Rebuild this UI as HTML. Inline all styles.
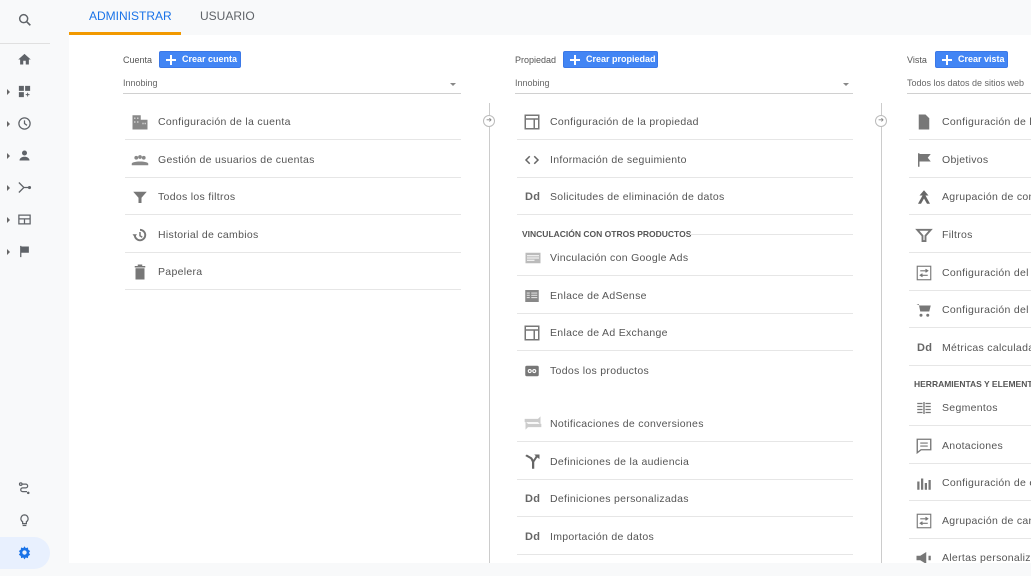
<!DOCTYPE html>
<html><head><meta charset="utf-8"><style>
*{margin:0;padding:0;box-sizing:border-box}
body{width:1031px;height:572px;overflow:hidden;background:#f8f9fa;font-family:"Liberation Sans",Arial,sans-serif;position:relative;color:#444}
.side{position:absolute;left:0;top:0;width:50px;height:572px;background:#f8f9fa}
.main{position:absolute;left:69px;top:35px;width:962px;height:528px;background:#fff}
.tab{position:absolute;top:9px;font-size:12px;color:#5f6368}
.r{position:absolute;height:38px;border-bottom:1px solid #e6e6e6;font-size:10.5px;color:#555;letter-spacing:.3px}
.r .t{position:absolute;left:33px;top:14px;white-space:nowrap}
.r svg,.r .ic{position:absolute;left:6px;top:11px}
.nb{border-bottom:none}
.dd{font-weight:bold;color:#666;font-size:11px;position:absolute;left:8px;top:14px}
.lbl{position:absolute;font-size:9px;color:#555}
.btn{position:absolute;height:17px;background:#4285f4;border:1px solid #3b78e7;border-radius:2px;color:#fff;font-size:9px;font-weight:bold;line-height:15px;padding-left:22px}
.btn:before{content:"";position:absolute;left:6px;top:7px;width:10px;height:2px;background:#fff}
.btn:after{content:"";position:absolute;left:10px;top:3px;width:2px;height:10px;background:#fff}
.sel{position:absolute;font-size:9px;color:#666;border-bottom:1px solid #d0d0d0;height:16px}
.hdr{position:absolute;font-size:8.5px;font-weight:bold;color:#555;white-space:nowrap}
.vl{position:absolute;width:1px;background:#ccc}
.circ{position:absolute;width:12px;height:12px;border:1px solid #bbb;border-radius:50%;background:#fff;font-size:7px;color:#888;text-align:center;line-height:10px}
.si{position:absolute;left:17px}
.ar{position:absolute;left:7px;width:0;height:0;border-left:3px solid #666;border-top:3px solid transparent;border-bottom:3px solid transparent}
</style></head><body>
<div class="side">
<svg class="si" style="top:12px" width="16" height="16" viewBox="0 0 24 24"><circle cx="10" cy="10" r="6" fill="none" stroke="#5f6368" stroke-width="2.2"/><path d="M14.5 14.5L20 20" stroke="#5f6368" stroke-width="2.5"/></svg>
<div style="position:absolute;left:0;top:43px;width:50px;height:1px;background:#e0e0e0"></div>
<svg class="si" style="top:52px" width="15" height="15" viewBox="0 0 24 24"><path d="M10 20v-6h4v6h5v-8h3L12 3 2 12h3v8z" fill="#5f6368"/></svg>
<div class="ar" style="top:89px"></div>
<svg class="si" style="top:84px" width="15" height="15" viewBox="0 0 24 24"><path d="M3 3h8v8H3zM13 3h8v8h-8zM3 13h8v8H3z" fill="#5f6368"/><path d="M17 14v6M14 17h6" stroke="#5f6368" stroke-width="1.5"/></svg>
<div class="ar" style="top:121px"></div>
<svg class="si" style="top:116px" width="15" height="15" viewBox="0 0 24 24"><circle cx="12" cy="12" r="9" fill="none" stroke="#5f6368" stroke-width="2"/><path d="M12 7v5l4 3" fill="none" stroke="#5f6368" stroke-width="2"/></svg>
<div class="ar" style="top:153px"></div>
<svg class="si" style="top:148px" width="15" height="15" viewBox="0 0 24 24"><circle cx="12" cy="8" r="4" fill="#5f6368"/><path d="M4 20c0-4 4-6 8-6s8 2 8 6z" fill="#5f6368"/></svg>
<div class="ar" style="top:185px"></div>
<svg class="si" style="top:180px" width="15" height="15" viewBox="0 0 24 24"><path d="M3 4l8 8-8 8M11 12h8" fill="none" stroke="#5f6368" stroke-width="2"/><circle cx="20" cy="12" r="2.5" fill="#5f6368"/></svg>
<div class="ar" style="top:217px"></div>
<svg class="si" style="top:212px" width="15" height="15" viewBox="0 0 24 24"><rect x="3" y="5" width="18" height="14" fill="none" stroke="#5f6368" stroke-width="2"/><path d="M3 11h18M12 11v8" stroke="#5f6368" stroke-width="2"/></svg>
<div class="ar" style="top:249px"></div>
<svg class="si" style="top:244px" width="15" height="15" viewBox="0 0 24 24"><path d="M5 3h2v18H5zM7 4h12v10H7z" fill="#5f6368"/></svg>
<svg class="si" style="top:481px" width="15" height="15" viewBox="0 0 24 24"><circle cx="6" cy="5" r="2" fill="none" stroke="#5f6368" stroke-width="2"/><circle cx="18" cy="19" r="2" fill="#5f6368"/><path d="M8 5h6a3 3 0 010 6H9a3 3 0 000 6h7" fill="none" stroke="#5f6368" stroke-width="2"/></svg>
<svg class="si" style="top:513px" width="15" height="15" viewBox="0 0 24 24"><path d="M12 3a6 6 0 00-3 11v3h6v-3a6 6 0 00-3-11zM9 20h6" fill="none" stroke="#5f6368" stroke-width="2"/></svg>
<div style="position:absolute;left:0;top:537px;width:50px;height:32px;background:#e8f0fe;border-radius:0 16px 16px 0"></div>
<svg class="si" style="top:545px" width="15" height="15" viewBox="0 0 24 24"><path d="M12 2l2 3 3.5-1 .5 3.5 3 2-2 3 2 3-3 2-.5 3.5-3.5-1-2 3-2-3-3.5 1-.5-3.5-3-2 2-3-2-3 3-2 .5-3.5 3.5 1z" fill="#1a73e8"/><circle cx="12" cy="12" r="3.5" fill="#e8f0fe"/></svg>
</div>
<div class="tab" style="left:89px;color:#1a73e8">ADMINISTRAR</div>
<div class="tab" style="left:200px">USUARIO</div>
<div style="position:absolute;left:69px;top:32px;width:112px;height:3px;background:#f29900"></div>
<div class="main"></div>

<!-- col1 -->
<div class="lbl" style="left:123px;top:55px">Cuenta</div>
<div class="btn" style="left:159px;top:51px;width:82px">Crear cuenta</div>
<div class="sel" style="left:123px;top:78px;width:338px">Innobing</div>
<span style="position:absolute;left:450px;top:83px;border-left:3px solid transparent;border-right:3px solid transparent;border-top:3px solid #888"></span>
<div class="r" style="left:125px;top:102px;width:336px"><svg width="18" height="18" viewBox="0 0 24 24"><path d="M2 3h11v19H2zM13 9h9v13h-9z" fill="#888"/><path d="M4 6h2v2H4zM8 6h2v2H8zM4 11h2v2H4zM8 11h2v2H8zM15 13h2v2h-2zM18 13h2v2h-2z" fill="#ccc"/></svg><span class="t">Configuración de la cuenta</span></div>
<div class="r" style="left:125px;top:140px;width:336px"><svg width="18" height="18" viewBox="0 0 24 24"><circle cx="7" cy="9" r="2.5" fill="#888"/><circle cx="12" cy="8" r="2.5" fill="#888"/><circle cx="17" cy="9" r="2.5" fill="#888"/><path d="M1 17c0-4 22-4 22 0v2H1z" fill="#888"/></svg><span class="t">Gestión de usuarios de cuentas</span></div>
<div class="r" style="left:125px;top:177px;width:336px"><svg width="18" height="18" viewBox="0 0 24 24"><path d="M3 5h18l-7 8v7h-4v-7z" fill="#777"/></svg><span class="t">Todos los filtros</span></div>
<div class="r" style="left:125px;top:215px;width:336px"><svg width="18" height="18" viewBox="0 0 24 24"><path d="M5 12a7 7 0 107-7" fill="none" stroke="#777" stroke-width="2.5"/><path d="M12 8v5l3 2" fill="none" stroke="#777" stroke-width="2"/><path d="M2 11h6l-3 4z" fill="#777"/></svg><span class="t">Historial de cambios</span></div>
<div class="r" style="left:125px;top:252px;width:336px"><svg width="18" height="18" viewBox="0 0 24 24"><path d="M5 4h14v2H5zM9 2h6v2H9zM6 7h12v15H6z" fill="#777"/></svg><span class="t">Papelera</span></div>

<div class="vl" style="left:489px;top:103px;height:460px"></div>
<div class="circ" style="left:483px;top:115px">➜</div>
<div class="vl" style="left:881px;top:103px;height:460px"></div>
<div class="circ" style="left:875px;top:115px">➜</div>

<!-- col2 -->
<div class="lbl" style="left:515px;top:55px">Propiedad</div>
<div class="btn" style="left:563px;top:51px;width:95px">Crear propiedad</div>
<div class="sel" style="left:515px;top:78px;width:338px">Innobing<span style="position:absolute;right:4px;top:5px;border-left:3px solid transparent;border-right:3px solid transparent;border-top:3px solid #888"></span></div>
<div class="r" style="left:517px;top:102px;width:336px"><svg width="18" height="18" viewBox="0 0 24 24"><rect x="3" y="3" width="18" height="18" fill="none" stroke="#777" stroke-width="2"/><path d="M3 8h18M15 8v13" stroke="#777" stroke-width="2"/></svg><span class="t">Configuración de la propiedad</span></div>
<div class="r" style="left:517px;top:140px;width:336px"><svg width="18" height="18" viewBox="0 0 24 24"><path d="M9 7l-5 5 5 5M15 7l5 5-5 5" fill="none" stroke="#666" stroke-width="2"/></svg><span class="t">Información de seguimiento</span></div>
<div class="r" style="left:517px;top:177px;width:336px"><span class="dd">Dd</span><span class="t">Solicitudes de eliminación de datos</span></div>
<div class="hdr" style="left:522px;top:229px">VINCULACIÓN CON OTROS PRODUCTOS</div>
<div style="position:absolute;left:690px;top:234px;width:163px;height:1px;background:#e6e6e6"></div>
<div class="r" style="left:517px;top:238px;width:336px"><svg width="20" height="18" viewBox="0 0 24 24"><rect x="2" y="5" width="20" height="14" fill="#bbb"/><path d="M4 9h16M4 12h16M4 15h10" stroke="#fff" stroke-width="1.2"/></svg><span class="t">Vinculación con Google Ads</span></div>
<div class="r" style="left:517px;top:276px;width:336px"><svg width="18" height="18" viewBox="0 0 24 24"><rect x="3" y="4" width="18" height="16" fill="#888"/><path d="M5 8h4M5 11h4M5 14h4M11 8h8M11 11h8M11 14h8" stroke="#ddd" stroke-width="1.5"/></svg><span class="t">Enlace de AdSense</span></div>
<div class="r" style="left:517px;top:313px;width:336px"><svg width="18" height="18" viewBox="0 0 24 24"><rect x="3" y="3" width="18" height="18" fill="none" stroke="#777" stroke-width="2"/><path d="M3 8h18M15 8v13" stroke="#777" stroke-width="2"/></svg><span class="t">Enlace de Ad Exchange</span></div>
<div class="r nb" style="left:517px;top:351px;width:336px"><svg width="18" height="18" viewBox="0 0 24 24"><rect x="3" y="5" width="18" height="14" rx="2" fill="#777"/><circle cx="9" cy="12" r="2" fill="none" stroke="#fff" stroke-width="1.5"/><circle cx="15" cy="12" r="2" fill="none" stroke="#fff" stroke-width="1.5"/></svg><span class="t">Todos los productos</span></div>
<div class="r" style="left:517px;top:404px;width:336px"><svg width="20" height="20" viewBox="0 0 24 24" style="top:9px"><path d="M2 7h16l3-3v10l-3-3H2zM22 17H6l-3 3V10l3 3h16z" fill="#ccc"/></svg><span class="t">Notificaciones de conversiones</span></div>
<div class="r" style="left:517px;top:442px;width:336px"><svg width="18" height="18" viewBox="0 0 24 24"><path d="M3 4l7 4 2 4v9h3v-9l4-6 3 2V2h-7l2 2-3 5-2-3-7-4z" fill="#666"/></svg><span class="t">Definiciones de la audiencia</span></div>
<div class="r" style="left:517px;top:479px;width:336px"><span class="dd">Dd</span><span class="t">Definiciones personalizadas</span></div>
<div class="r" style="left:517px;top:517px;width:336px"><span class="dd">Dd</span><span class="t">Importación de datos</span></div>

<!-- col3 -->
<div class="lbl" style="left:907px;top:55px">Vista</div>
<div class="btn" style="left:935px;top:51px;width:73px">Crear vista</div>
<div class="sel" style="left:907px;top:78px;width:130px">Todos los datos de sitios web</div>
<div class="r" style="left:909px;top:102px;width:130px"><svg width="18" height="18" viewBox="0 0 24 24"><path d="M5 2h9l5 5v15H5z" fill="#777"/></svg><span class="t">Configuración de la vista</span></div>
<div class="r" style="left:909px;top:140px;width:130px"><svg width="18" height="18" viewBox="0 0 24 24"><path d="M4 3h2v18H4zM6 4h15l-4 5 4 5H6z" fill="#777"/></svg><span class="t">Objetivos</span></div>
<div class="r" style="left:909px;top:177px;width:130px"><svg width="18" height="18" viewBox="0 0 24 24"><path d="M12 3l6 7h-4l6 11h-4l-4-7-4 7H4l6-11H6z" fill="#666"/></svg><span class="t">Agrupación de contenido</span></div>
<div class="r" style="left:909px;top:215px;width:130px"><svg width="18" height="18" viewBox="0 0 24 24"><path d="M3 5h18l-7 8v7h-4v-7z" fill="none" stroke="#777" stroke-width="2.5"/></svg><span class="t">Filtros</span></div>
<div class="r" style="left:909px;top:253px;width:130px"><svg width="18" height="18" viewBox="0 0 24 24"><rect x="3" y="3" width="18" height="18" fill="none" stroke="#777" stroke-width="1.5"/><path d="M7 9h10M7 15h10M14 7l3 2-3 2M10 13l-3 2 3 2" fill="none" stroke="#777" stroke-width="1.5"/></svg><span class="t">Configuración del canal</span></div>
<div class="r" style="left:909px;top:290px;width:130px"><svg width="18" height="18" viewBox="0 0 24 24"><path d="M2 4h3l2 10h12l2-8H6" fill="#777"/><circle cx="8" cy="19" r="2" fill="#777"/><circle cx="17" cy="19" r="2" fill="#777"/></svg><span class="t">Configuración del comercio</span></div>
<div class="r" style="left:909px;top:328px;width:130px"><span class="dd">Dd</span><span class="t">Métricas calculadas</span></div>
<div class="hdr" style="left:914px;top:379px">HERRAMIENTAS Y ELEMENTOS</div>
<div class="r" style="left:909px;top:388px;width:130px"><svg width="18" height="18" viewBox="0 0 24 24"><path d="M3 6h7M3 10h7M3 14h7M3 18h7M14 6h7M14 10h7M14 14h7M14 18h7M12 4v16" stroke="#777" stroke-width="1.8"/></svg><span class="t">Segmentos</span></div>
<div class="r" style="left:909px;top:426px;width:130px"><svg width="18" height="18" viewBox="0 0 24 24"><path d="M3 3h18v14H8l-5 4z" fill="none" stroke="#777" stroke-width="1.8"/><path d="M7 8h10M7 12h10" stroke="#777" stroke-width="1.5"/></svg><span class="t">Anotaciones</span></div>
<div class="r" style="left:909px;top:463px;width:130px"><svg width="18" height="18" viewBox="0 0 24 24"><path d="M3 10h3v11H3zM8 6h3v15H8zM13 12h3v9h-3zM18 8h3v13h-3z" fill="#777"/></svg><span class="t">Configuración de embudo</span></div>
<div class="r" style="left:909px;top:501px;width:130px"><svg width="18" height="18" viewBox="0 0 24 24"><rect x="3" y="3" width="18" height="18" fill="none" stroke="#777" stroke-width="1.5"/><path d="M7 9h10M7 15h10M14 7l3 2-3 2M10 13l-3 2 3 2" fill="none" stroke="#777" stroke-width="1.5"/></svg><span class="t">Agrupación de canales</span></div>
<div class="r nb" style="left:909px;top:538px;width:130px"><svg width="18" height="18" viewBox="0 0 24 24"><path d="M2 9h5l8-5v16l-8-5H2zM18 9h3v6h-3z" fill="#777"/></svg><span class="t">Alertas personalizadas</span></div>
<div style="position:absolute;left:50px;top:563px;width:981px;height:9px;background:#f8f9fa"></div>
</body></html>
